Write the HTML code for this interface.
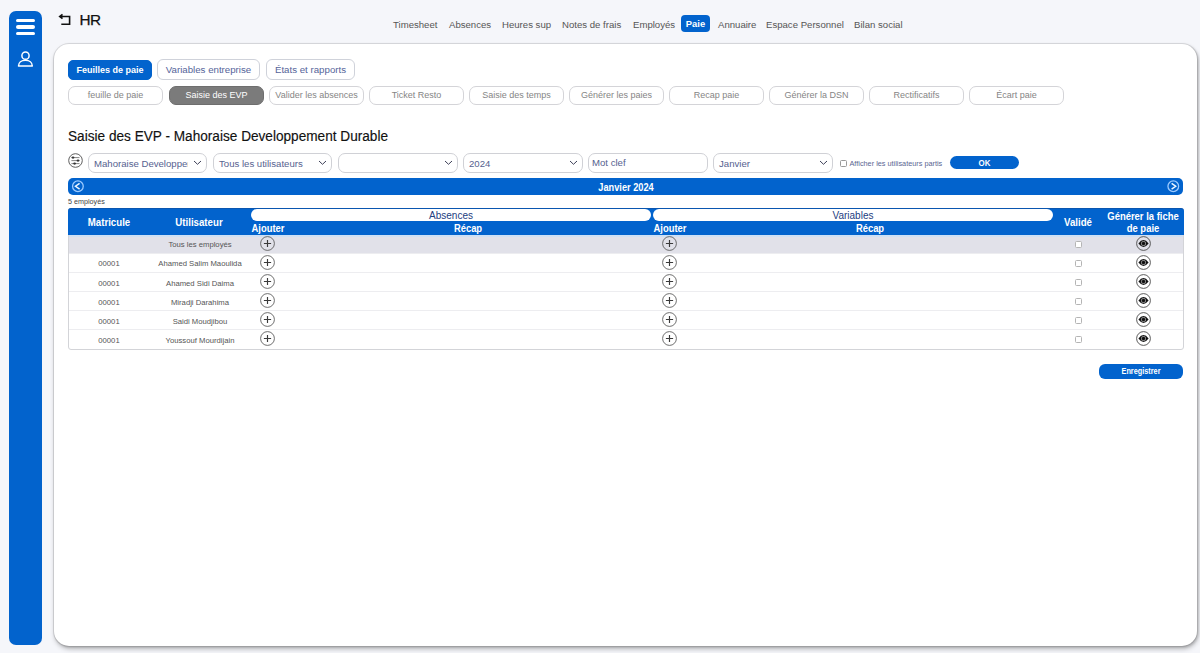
<!DOCTYPE html>
<html><head><meta charset="utf-8"><style>
*{box-sizing:border-box;margin:0;padding:0}
html,body{width:1200px;height:653px;overflow:hidden;background:#f5f6fa;font-family:"Liberation Sans",sans-serif;position:relative}
div,svg{position:absolute}
.t{white-space:nowrap}
#side{left:8.5px;top:11px;width:33.5px;height:634px;background:#0263cd;border-radius:7px}
.hb{left:7.5px;width:18.5px;height:3.4px;border-radius:2px;background:#fff}
#card{left:54px;top:44px;width:1143px;height:602px;background:#fff;border-radius:15px;box-shadow:0 0 0 1px rgba(0,0,0,.09), 1px 1px 2px 1px rgba(0,0,0,.1), 1px 3px 5px rgba(0,0,0,.25)}
.nav{top:19px;font-size:9.6px;color:#555;white-space:nowrap}
.tb{height:21px;border:1px solid #cfd2da;border-radius:6px;font-size:9.7px;color:#55649a;text-align:center;line-height:19px;white-space:nowrap;background:#fff}
.sb{top:86px;width:95px;height:19px;border:1px solid #d4d4d8;border-radius:7px;font-size:9px;color:#858585;text-align:center;line-height:17px;white-space:nowrap;background:#fff}
.sel{top:153px;height:19.5px;border:1px solid #d0d1d6;border-radius:7px;font-size:9.6px;color:#56628f;line-height:19px;padding-left:5px;white-space:nowrap;overflow:hidden;background:#fff}
.chev{right:4.5px;top:5.5px}
#tbl{left:68px;top:208px;width:1116px;height:142px;border:1px solid #d3d4d8;border-radius:3px;background:#fff}
.th{color:#fff;font-weight:bold;white-space:nowrap;text-align:center}
.row{left:0;width:1114px;height:19px;border-top:1px solid #ececee}
.cell{line-height:18px;font-size:7.7px;color:#555;text-align:center;white-space:nowrap}
.plus{top:1px}
.chk{left:1005.5px;margin-top:1.2px;width:7px;height:7px;border:1px solid #b4b4b4;border-radius:1.5px;background:#fff}
.eye{left:1067px;top:1px}
</style></head><body>
<div id="side"><div class="hb" style="top:7.5px"></div><div class="hb" style="top:14.25px"></div><div class="hb" style="top:21px"></div><svg style="left:7.5px;top:40px" width="19" height="18" viewBox="0 0 19 18"><circle cx="9.5" cy="4.7" r="3.6" fill="none" stroke="#fff" stroke-width="1.5"/><path d="M2.5 15 C2.5 11.5 5.5 9.2 9.4 9.2 C13.3 9.2 16.3 11.5 16.3 15 Z" fill="none" stroke="#fff" stroke-width="1.5" stroke-linejoin="round"/></svg></div>
<svg style="left:56px;top:10px" width="18" height="18" viewBox="0 0 18 18"><path d="M6.5 4.3 L3.7 6.5 L6.5 8.7 M3.7 6.5 H13.6 V14.2 H5.3" fill="none" stroke="#111" stroke-width="1.6" stroke-linejoin="miter"/></svg>
<div class="t" style="left:79.5px;top:10.5px;font-size:15.3px;letter-spacing:-0.6px;color:#111;-webkit-text-stroke:0.25px #111">HR</div>
<div class="nav" style="left:393px">Timesheet</div>
<div class="nav" style="left:449px">Absences</div>
<div class="nav" style="left:502px">Heures sup</div>
<div class="nav" style="left:562px">Notes de frais</div>
<div class="nav" style="left:633px">Employés</div>
<div class="nav" style="left:718px">Annuaire</div>
<div class="nav" style="left:766px">Espace Personnel</div>
<div class="nav" style="left:854px">Bilan social</div>
<div style="left:681px;top:15px;width:29px;height:17px;background:#0263cd;border-radius:4px;color:#fff;font-size:9.4px;font-weight:bold;text-align:center;line-height:18px">Paie</div>
<div id="card"></div>
<div class="tb" style="left:68px;top:60px;width:84px;height:20px;background:#0263cd;border-color:#0263cd;color:#fff;font-weight:bold;border-radius:5px;line-height:18px;font-size:9px">Feuilles de paie</div>
<div class="tb" style="left:157px;top:59px;width:103px">Variables entreprise</div>
<div class="tb" style="left:266px;top:59px;width:89px">États et rapports</div>
<div class="sb" style="left:68px;">feuille de paie</div>
<div class="sb" style="left:169px;background:#7b7b7b;border-color:#6e6e6e;color:#fff">Saisie des EVP</div>
<div class="sb" style="left:269px;">Valider les absences</div>
<div class="sb" style="left:369px;">Ticket Resto</div>
<div class="sb" style="left:469px;">Saisie des temps</div>
<div class="sb" style="left:569px;">Générer les paies</div>
<div class="sb" style="left:669px;">Recap paie</div>
<div class="sb" style="left:769px;">Générer la DSN</div>
<div class="sb" style="left:869px;">Rectificatifs</div>
<div class="sb" style="left:969px;">Écart paie</div>
<div class="t" style="left:68px;top:128px;font-size:14px;color:#111;transform:scaleX(.973);transform-origin:0 0;-webkit-text-stroke:0.15px #111">Saisie des EVP - Mahoraise Developpement Durable</div>
<svg style="left:68px;top:153px" width="15" height="15" viewBox="0 0 15 15"><circle cx="7.5" cy="7.5" r="6.8" fill="none" stroke="#555" stroke-width="0.95"/><path d="M3.4 4.6 H11.5 M3.4 7.6 H11.5 M3.4 10.6 H11.5" stroke="#777" stroke-width="0.9"/><ellipse cx="5" cy="4.6" rx="1.4" ry="1.1" fill="#333"/><ellipse cx="10" cy="7.6" rx="1.4" ry="1.1" fill="#333"/><ellipse cx="6.6" cy="10.6" rx="1.4" ry="1.1" fill="#333"/></svg>
<div class="sel" style="left:88px;width:119px"><div style="left:5px;top:0;width:94px;overflow:hidden;height:18px;line-height:19px">Mahoraise Developper</div><svg class="chev" width="9" height="6" viewBox="0 0 9 6"><path d="M1 1 L4.5 4.3 L8 1" fill="none" stroke="#3d4058" stroke-width="1"/></svg></div>
<div class="sel" style="left:213px;width:119px">Tous les utilisateurs<svg class="chev" width="9" height="6" viewBox="0 0 9 6"><path d="M1 1 L4.5 4.3 L8 1" fill="none" stroke="#3d4058" stroke-width="1"/></svg></div>
<div class="sel" style="left:338px;width:120px"><svg class="chev" width="9" height="6" viewBox="0 0 9 6"><path d="M1 1 L4.5 4.3 L8 1" fill="none" stroke="#3d4058" stroke-width="1"/></svg></div>
<div class="sel" style="left:463px;width:120px">2024<svg class="chev" width="9" height="6" viewBox="0 0 9 6"><path d="M1 1 L4.5 4.3 L8 1" fill="none" stroke="#3d4058" stroke-width="1"/></svg></div>
<div class="sel" style="left:588px;width:120px;line-height:17px;padding-left:3px">Mot clef</div>
<div class="sel" style="left:713px;width:120px">Janvier<svg class="chev" width="9" height="6" viewBox="0 0 9 6"><path d="M1 1 L4.5 4.3 L8 1" fill="none" stroke="#3d4058" stroke-width="1"/></svg></div>
<div style="left:840px;top:160px;width:7px;height:7px;border:1px solid #999;border-radius:1.5px;background:#fff"></div>
<div class="t" style="left:849.5px;top:159px;font-size:7.3px;color:#5a6692">Afficher les utilisateurs partis</div>
<div style="left:950px;top:156.2px;width:69px;height:13.3px;background:#0263cd;border-radius:6.5px;color:#fff;font-size:8.8px;font-weight:bold;text-align:center;line-height:14.2px"><div style="left:0;top:0;width:69px;transform:scaleX(.9)">OK</div></div>
<div style="left:68px;top:178px;width:1115px;height:17px;background:#0263cd;border-radius:5px"></div>
<svg style="left:71px;top:180px" width="14" height="13" viewBox="0 0 14 13"><circle cx="6.9" cy="6.25" r="5.35" fill="none" stroke="#9ccaff" stroke-width="1.3"/><path d="M8.6 3.4 L4.5 6.25 L8.6 9.1" fill="none" stroke="#eef6ff" stroke-width="1.5"/></svg>
<svg style="left:1166px;top:180px" width="14" height="13" viewBox="0 0 14 13"><circle cx="7.3" cy="6.25" r="5.35" fill="none" stroke="#9ccaff" stroke-width="1.3"/><path d="M5.6 3.4 L9.7 6.25 L5.6 9.1" fill="none" stroke="#eef6ff" stroke-width="1.5"/></svg>
<div style="left:526px;top:182px;width:200px;text-align:center;font-size:10px;font-weight:bold;color:#fff;line-height:12px;transform:scaleX(.92)">Janvier 2024</div>
<div class="t" style="left:68px;top:197px;font-size:7.2px;color:#444">5 employés</div>
<div id="tbl"><div style="left:-1px;top:-1px;width:1116px;height:26.5px;background:#0263cd;border-radius:3px 3px 0 0;border-top:1px solid #0a56b0"></div>
<div class="th" style="left:-60.0px;top:7px;width:200px;font-size:11px;line-height:12.65px;transform:scaleX(0.88)">Matricule</div>
<div class="th" style="left:30.2px;top:7px;width:200px;font-size:11px;line-height:12.65px;transform:scaleX(0.88)">Utilisateur</div>
<div style="left:182px;top:0;width:400px;height:12px;background:#fff;border-radius:6px;font-size:10px;color:#23407f;text-align:center;line-height:13.5px">Absences</div>
<div style="left:584px;top:0;width:400px;height:12px;background:#fff;border-radius:6px;font-size:10px;color:#23407f;text-align:center;line-height:13.5px">Variables</div>
<div class="th" style="left:168.8px;top:14px;width:60px;font-size:10px;line-height:11.50px;transform:scaleX(0.94)">Ajouter</div>
<div class="th" style="left:369.0px;top:14px;width:60px;font-size:10px;line-height:11.50px;transform:scaleX(0.94)">Récap</div>
<div class="th" style="left:570.7px;top:14px;width:60px;font-size:10px;line-height:11.50px;transform:scaleX(0.94)">Ajouter</div>
<div class="th" style="left:771.0px;top:14px;width:60px;font-size:10px;line-height:11.50px;transform:scaleX(0.94)">Récap</div>
<div class="th" style="left:979.0px;top:7px;width:60px;font-size:10.5px;line-height:12.07px;transform:scaleX(0.92)">Validé</div>
<div class="th" style="left:1024.0px;top:2px;width:100px;font-size:10.5px;line-height:11.5px;transform:scaleX(0.9)">Générer la fiche</div>
<div class="th" style="left:1024.0px;top:13.5px;width:100px;font-size:10.5px;line-height:11.5px;transform:scaleX(0.9)">de paie</div>
<div style="left:0;top:25.5px;width:1114px;height:19.5px;background:#e1e1e9"></div>
<div style="left:0;top:25.5px;width:1114px;height:2px;background:#cfe0f4"></div>
<div class="cell" style="left:0;top:27.3px;width:80px"></div><div class="cell" style="left:80px;top:27.3px;width:102px">Tous les employés</div>
<svg style="left:191.2px;top:27.1px" width="15" height="15" viewBox="0 0 15 15"><circle cx="7.5" cy="7.5" r="6.9" fill="none" stroke="#555" stroke-width="0.85"/><path d="M7.5 3.9 V11.1 M3.9 7.5 H11.1" stroke="#3a3a3a" stroke-width="1.15"/></svg><svg style="left:593.2px;top:27.1px" width="15" height="15" viewBox="0 0 15 15"><circle cx="7.5" cy="7.5" r="6.9" fill="none" stroke="#555" stroke-width="0.85"/><path d="M7.5 3.9 V11.1 M3.9 7.5 H11.1" stroke="#3a3a3a" stroke-width="1.15"/></svg>
<div class="chk" style="top:30.6px"></div><svg style="left:1066.5px;top:27.1px" width="15" height="15" viewBox="0 0 15 15"><circle cx="7.5" cy="7.5" r="6.9" fill="none" stroke="#4a4a4a" stroke-width="0.9"/><path d="M2.4 7.5 Q7.5 0.6 12.6 7.5 Q7.5 14.4 2.4 7.5 Z" fill="#111"/><circle cx="7.5" cy="7.5" r="2.5" fill="#999"/><circle cx="7.5" cy="7.5" r="1.7" fill="#111"/></svg>
<div style="left:0;top:44.0px;width:1114px;height:1px;background:#ededf0"></div>
<div class="cell" style="left:0;top:46.3px;width:80px">00001</div><div class="cell" style="left:80px;top:46.3px;width:102px">Ahamed Salim Maoulida</div>
<svg style="left:191.2px;top:46.1px" width="15" height="15" viewBox="0 0 15 15"><circle cx="7.5" cy="7.5" r="6.9" fill="none" stroke="#555" stroke-width="0.85"/><path d="M7.5 3.9 V11.1 M3.9 7.5 H11.1" stroke="#3a3a3a" stroke-width="1.15"/></svg><svg style="left:593.2px;top:46.1px" width="15" height="15" viewBox="0 0 15 15"><circle cx="7.5" cy="7.5" r="6.9" fill="none" stroke="#555" stroke-width="0.85"/><path d="M7.5 3.9 V11.1 M3.9 7.5 H11.1" stroke="#3a3a3a" stroke-width="1.15"/></svg>
<div class="chk" style="top:49.6px"></div><svg style="left:1066.5px;top:46.1px" width="15" height="15" viewBox="0 0 15 15"><circle cx="7.5" cy="7.5" r="6.9" fill="none" stroke="#4a4a4a" stroke-width="0.9"/><path d="M2.4 7.5 Q7.5 0.6 12.6 7.5 Q7.5 14.4 2.4 7.5 Z" fill="#111"/><circle cx="7.5" cy="7.5" r="2.5" fill="#999"/><circle cx="7.5" cy="7.5" r="1.7" fill="#111"/></svg>
<div style="left:0;top:63.2px;width:1114px;height:1px;background:#ededf0"></div>
<div class="cell" style="left:0;top:65.6px;width:80px">00001</div><div class="cell" style="left:80px;top:65.6px;width:102px">Ahamed Sidi Daima</div>
<svg style="left:191.2px;top:65.4px" width="15" height="15" viewBox="0 0 15 15"><circle cx="7.5" cy="7.5" r="6.9" fill="none" stroke="#555" stroke-width="0.85"/><path d="M7.5 3.9 V11.1 M3.9 7.5 H11.1" stroke="#3a3a3a" stroke-width="1.15"/></svg><svg style="left:593.2px;top:65.4px" width="15" height="15" viewBox="0 0 15 15"><circle cx="7.5" cy="7.5" r="6.9" fill="none" stroke="#555" stroke-width="0.85"/><path d="M7.5 3.9 V11.1 M3.9 7.5 H11.1" stroke="#3a3a3a" stroke-width="1.15"/></svg>
<div class="chk" style="top:68.9px"></div><svg style="left:1066.5px;top:65.4px" width="15" height="15" viewBox="0 0 15 15"><circle cx="7.5" cy="7.5" r="6.9" fill="none" stroke="#4a4a4a" stroke-width="0.9"/><path d="M2.4 7.5 Q7.5 0.6 12.6 7.5 Q7.5 14.4 2.4 7.5 Z" fill="#111"/><circle cx="7.5" cy="7.5" r="2.5" fill="#999"/><circle cx="7.5" cy="7.5" r="1.7" fill="#111"/></svg>
<div style="left:0;top:82.2px;width:1114px;height:1px;background:#ededf0"></div>
<div class="cell" style="left:0;top:84.6px;width:80px">00001</div><div class="cell" style="left:80px;top:84.6px;width:102px">Miradji Darahima</div>
<svg style="left:191.2px;top:84.4px" width="15" height="15" viewBox="0 0 15 15"><circle cx="7.5" cy="7.5" r="6.9" fill="none" stroke="#555" stroke-width="0.85"/><path d="M7.5 3.9 V11.1 M3.9 7.5 H11.1" stroke="#3a3a3a" stroke-width="1.15"/></svg><svg style="left:593.2px;top:84.4px" width="15" height="15" viewBox="0 0 15 15"><circle cx="7.5" cy="7.5" r="6.9" fill="none" stroke="#555" stroke-width="0.85"/><path d="M7.5 3.9 V11.1 M3.9 7.5 H11.1" stroke="#3a3a3a" stroke-width="1.15"/></svg>
<div class="chk" style="top:87.9px"></div><svg style="left:1066.5px;top:84.4px" width="15" height="15" viewBox="0 0 15 15"><circle cx="7.5" cy="7.5" r="6.9" fill="none" stroke="#4a4a4a" stroke-width="0.9"/><path d="M2.4 7.5 Q7.5 0.6 12.6 7.5 Q7.5 14.4 2.4 7.5 Z" fill="#111"/><circle cx="7.5" cy="7.5" r="2.5" fill="#999"/><circle cx="7.5" cy="7.5" r="1.7" fill="#111"/></svg>
<div style="left:0;top:101.3px;width:1114px;height:1px;background:#ededf0"></div>
<div class="cell" style="left:0;top:103.6px;width:80px">00001</div><div class="cell" style="left:80px;top:103.6px;width:102px">Saidi Moudjibou</div>
<svg style="left:191.2px;top:103.4px" width="15" height="15" viewBox="0 0 15 15"><circle cx="7.5" cy="7.5" r="6.9" fill="none" stroke="#555" stroke-width="0.85"/><path d="M7.5 3.9 V11.1 M3.9 7.5 H11.1" stroke="#3a3a3a" stroke-width="1.15"/></svg><svg style="left:593.2px;top:103.4px" width="15" height="15" viewBox="0 0 15 15"><circle cx="7.5" cy="7.5" r="6.9" fill="none" stroke="#555" stroke-width="0.85"/><path d="M7.5 3.9 V11.1 M3.9 7.5 H11.1" stroke="#3a3a3a" stroke-width="1.15"/></svg>
<div class="chk" style="top:106.9px"></div><svg style="left:1066.5px;top:103.4px" width="15" height="15" viewBox="0 0 15 15"><circle cx="7.5" cy="7.5" r="6.9" fill="none" stroke="#4a4a4a" stroke-width="0.9"/><path d="M2.4 7.5 Q7.5 0.6 12.6 7.5 Q7.5 14.4 2.4 7.5 Z" fill="#111"/><circle cx="7.5" cy="7.5" r="2.5" fill="#999"/><circle cx="7.5" cy="7.5" r="1.7" fill="#111"/></svg>
<div style="left:0;top:120.4px;width:1114px;height:1px;background:#ededf0"></div>
<div class="cell" style="left:0;top:122.6px;width:80px">00001</div><div class="cell" style="left:80px;top:122.6px;width:102px">Youssouf Mourdijain</div>
<svg style="left:191.2px;top:122.4px" width="15" height="15" viewBox="0 0 15 15"><circle cx="7.5" cy="7.5" r="6.9" fill="none" stroke="#555" stroke-width="0.85"/><path d="M7.5 3.9 V11.1 M3.9 7.5 H11.1" stroke="#3a3a3a" stroke-width="1.15"/></svg><svg style="left:593.2px;top:122.4px" width="15" height="15" viewBox="0 0 15 15"><circle cx="7.5" cy="7.5" r="6.9" fill="none" stroke="#555" stroke-width="0.85"/><path d="M7.5 3.9 V11.1 M3.9 7.5 H11.1" stroke="#3a3a3a" stroke-width="1.15"/></svg>
<div class="chk" style="top:125.9px"></div><svg style="left:1066.5px;top:122.4px" width="15" height="15" viewBox="0 0 15 15"><circle cx="7.5" cy="7.5" r="6.9" fill="none" stroke="#4a4a4a" stroke-width="0.9"/><path d="M2.4 7.5 Q7.5 0.6 12.6 7.5 Q7.5 14.4 2.4 7.5 Z" fill="#111"/><circle cx="7.5" cy="7.5" r="2.5" fill="#999"/><circle cx="7.5" cy="7.5" r="1.7" fill="#111"/></svg>
</div>
<div style="left:1099px;top:364px;width:84px;height:15px;background:#0263cd;border-radius:6px;color:#fff;font-size:8.8px;font-weight:bold;text-align:center;line-height:15px"><div style="left:0;top:0;width:84px;transform:scaleX(.83)">Enregistrer</div></div>
</body></html>
